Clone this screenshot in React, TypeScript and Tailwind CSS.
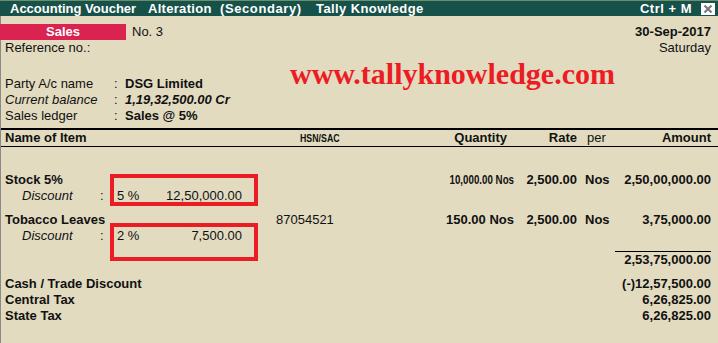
import React from "react";

function ItemRow({ name, hsn, qty, qtyNarrow, rate, per, amount }: { name: string; hsn?: string; qty: string; qtyNarrow?: boolean; rate: string; per: string; amount: string }) {
  return (
    <div className="flex h-[16px] leading-[16px]">
      <div className="w-[275px] pl-[4px] font-bold">{name}</div>
      <div className="w-[144px]">{hsn}</div>
      <div className="w-[94px] flex justify-end font-bold">
        {qtyNarrow ? (
          <span className="inline-block whitespace-nowrap origin-right scale-x-[0.75]">{qty}</span>
        ) : (
          <span>{qty}</span>
        )}
      </div>
      <div className="w-[63px] text-right font-bold">{rate}</div>
      <div className="w-[43px] pl-[8px] font-bold">{per}</div>
      <div className="w-[91px] text-right font-bold">{amount}</div>
    </div>
  );
}

function DiscountRow({ pct, amt }: { pct: string; amt: string }) {
  return (
    <div className="flex h-[16px] leading-[16px]">
      <span className="pl-[21px] w-[99px] italic">Discount</span>
      <span className="w-[17px]">:</span>
      <span className="w-[30px]">{pct}</span>
      <span className="w-[95px] text-right">{amt}</span>
    </div>
  );
}

function PartyRow({ label, value, italic, boldItalic }: { label: string; value: string; italic?: boolean; boldItalic?: boolean }) {
  return (
    <div className="flex h-[16px] leading-[16px]">
      <span className={"pl-[4px] w-[113px] " + (italic ? "italic" : "")}>{label}</span>
      <span className="w-[11px]">:</span>
      <span className={"font-bold " + (boldItalic ? "italic" : "")}>{value}</span>
    </div>
  );
}

function TotalRow({ label, value }: { label: string; value: string }) {
  return (
    <div className="flex h-[16px] leading-[16px] font-bold justify-between pl-[4px] pr-[7px]">
      <span>{label}</span>
      <span>{value}</span>
    </div>
  );
}

export default function App() {
  return (
    <div
      className="relative w-[718px] h-[343px] overflow-hidden bg-[#e2dbc0] text-[13px] text-[#111]"
      style={{ fontFamily: "'Liberation Sans', Arial, sans-serif" }}
    >
      <div className="h-[1px] bg-[#6f8e6c]" />
      <div className="h-[15px] bg-[#17524a] flex items-center text-white font-bold leading-[15px] whitespace-nowrap">
        <span className="pl-[10px] w-[148px]">Accounting Voucher</span>
        <span className="w-[72px] tracking-[0.3px]">Alteration</span>
        <span className="w-[96px] tracking-[0.6px]">(Secondary)</span>
        <span className="tracking-[0.4px]">Tally Knowledge</span>
        <span className="ml-auto tracking-[0.5px]">Ctrl + M</span>
        <span className="ml-[9px] mr-[3px] w-[14px] h-[12px] bg-white flex items-center justify-center">
          <svg width="10" height="10" viewBox="0 0 10 10">
            <path d="M1.5 1.5 L8.5 8.5 M8.5 1.5 L1.5 8.5" stroke="#7a7a7a" strokeWidth="2.2" />
          </svg>
        </span>
      </div>
      <div className="border-l border-[#8a8a8a] h-[327px]">
        <div className="h-[8px]" />
        <div className="flex h-[16px] leading-[16px]">
          <div className="w-[126px] -ml-[1px] bg-[#da2350] text-white font-bold text-center">Sales</div>
          <span className="pl-[6px]">No. 3</span>
          <span className="ml-auto pr-[7px] font-bold">30-Sep-2017</span>
        </div>
        <div className="flex h-[16px] leading-[16px]">
          <span className="pl-[4px]">Reference no.:</span>
          <span className="ml-auto pr-[7px]">Saturday</span>
        </div>
        <div className="h-[20px]" />
        <PartyRow label="Party A/c name" value="DSG Limited" />
        <PartyRow label="Current balance" value="1,19,32,500.00 Cr" italic boldItalic />
        <PartyRow label="Sales ledger" value="Sales @ 5%" />
        <div className="h-[4px]" />
        <div className="h-[2px] bg-black" />
        <div className="flex h-[16px] leading-[16px] font-bold">
          <div className="w-[275px] pl-[4px]">Name of Item</div>
          <div className="w-[144px] pl-[24px] text-[11px]">
            <span className="inline-block origin-left scale-x-[0.8]">HSN/SAC</span>
          </div>
          <div className="w-[94px] text-right pr-[7px]">Quantity</div>
          <div className="w-[63px] text-right">Rate</div>
          <div className="w-[43px] pl-[10px] font-normal">per</div>
          <div className="w-[91px] text-right">Amount</div>
        </div>
        <div className="h-[1px] bg-black" />
        <div className="h-[25px]" />
        <ItemRow name="Stock 5%" qty="10,000.00 Nos" qtyNarrow rate="2,500.00" per="Nos" amount="2,50,00,000.00" />
        <DiscountRow pct="5 %" amt="12,50,000.00" />
        <div className="h-[8px]" />
        <ItemRow name="Tobacco Leaves" hsn="87054521" qty="150.00 Nos" rate="2,500.00" per="Nos" amount="3,75,000.00" />
        <DiscountRow pct="2 %" amt="7,500.00" />
        <div className="h-[7px]" />
        <div className="flex justify-end pr-[7px]">
          <div className="w-[96px] h-[1px] bg-black" />
        </div>
        <div className="flex h-[16px] leading-[16px] justify-end pr-[7px] font-bold">2,53,75,000.00</div>
        <div className="h-[8px]" />
        <TotalRow label="Cash / Trade Discount" value="(-)12,57,500.00" />
        <TotalRow label="Central Tax" value="6,26,825.00" />
        <TotalRow label="State Tax" value="6,26,825.00" />
      </div>

      <div
        className="absolute left-[290px] top-[59px] text-[30px] leading-[30px] font-bold text-[#ec1c24]"
        style={{ fontFamily: "'Liberation Serif', 'Times New Roman', serif" }}
      >
        www.tallyknowledge.com
      </div>
      <div className="absolute left-[110px] top-[174px] w-[148px] h-[32px] border-[4px] border-[#ec1c24]" />
      <div className="absolute left-[110px] top-[223px] w-[148px] h-[38px] border-[4px] border-[#ec1c24]" />
    </div>
  );
}
